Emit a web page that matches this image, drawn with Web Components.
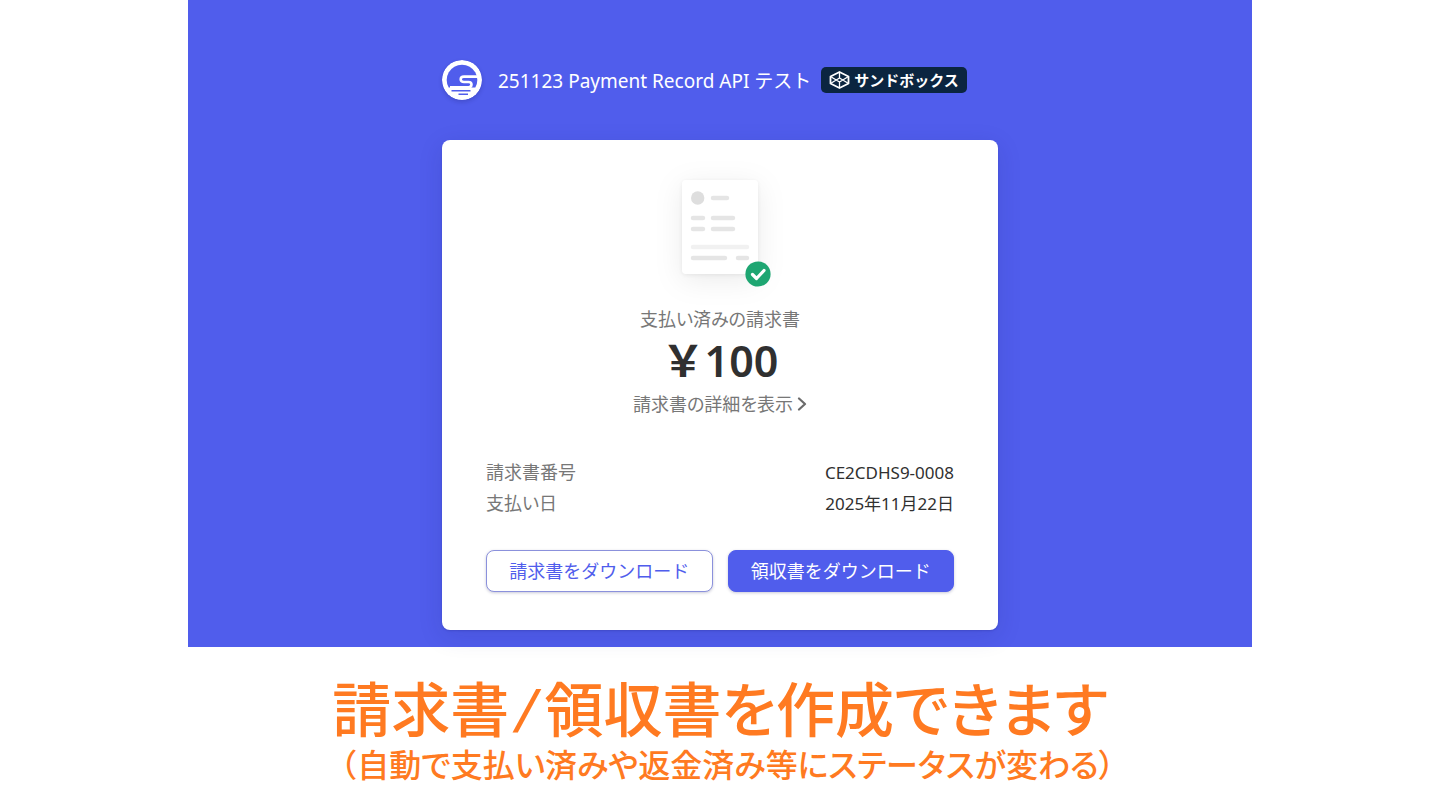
<!DOCTYPE html>
<html lang="ja">
<head>
<meta charset="utf-8">
<meta name="viewport" content="width=device-width, initial-scale=1">
<title>請求書</title>
<style>
  body {
    --brand-color: #505dec;
    --text-color: #303030;
    --muted-color: #777;
    --accent-color: #ff7a21;
    background: #fff;
    color: var(--text-color);
    font-family: "Noto Sans", "Noto Sans CJK JP", sans-serif;
    font-size: 18px;
    margin: 0;
  }

  .open {
    font-feature-settings: normal;
  }
</style>
</head>
<body>
  <invoice-stage>
    <merchant-header slot="header">
      251123 Payment Record API テスト
      <sandbox-badge slot="badge">サンドボックス</sandbox-badge>
    </merchant-header>
    <invoice-card>
      <span slot="status">支払い済みの請求書</span>
      <span slot="amount">￥100</span>
      <span slot="details">請求書の詳細を表示</span>
      <invoice-facts slot="facts" number="CE2CDHS9-0008" date="2025年11月22日"></invoice-facts>
      <download-button slot="actions">請求書をダウンロード</download-button>
      <download-button slot="actions" primary>領収書をダウンロード</download-button>
    </invoice-card>
  </invoice-stage>
  <slide-caption>
    <span slot="title">請求書/領収書を作成できます</span>
    <span slot="note"><span class="open">（</span>自動で支払い済みや返金済み等にステータスが変わる）</span>
  </slide-caption>

<script>
function attach(element, html) {
  const template = document.createElement('template');
  template.innerHTML = html;
  element.attachShadow({ mode: 'open' });
  element.shadowRoot.appendChild(template.content.cloneNode(true));
}

class InvoiceStage extends HTMLElement {
  constructor() {
    super();
    attach(this, `
      <style>
        :host {
          background: var(--brand-color);
          box-sizing: border-box;
          display: block;
          margin: 0 auto;
          max-width: 1064px;
          padding: 60px 16px 17px;
        }

        main {
          display: grid;
          gap: 40px;
          margin: 0 auto;
          max-width: 556px;
        }
      </style>
      <main>
        <slot name="header"></slot>
        <slot></slot>
      </main>
    `);
  }
}

class MerchantHeader extends HTMLElement {
  constructor() {
    super();
    attach(this, `
      <style>
        :host {
          align-items: center;
          color: #fff;
          display: flex;
          font-size: 19px;
          min-height: 40px;
          white-space: nowrap;
        }

        svg {
          border-radius: 50%;
          box-shadow: 0 2px 4px rgba(20, 20, 80, 0.2);
          flex: none;
          margin-right: 16px;
        }

        h1 {
          font: inherit;
          margin: 0 10px 0 0;
        }
      </style>
      <svg width="40" height="40" viewBox="0 0 40 40" aria-hidden="true">
        <circle cx="20" cy="20" r="20" fill="#fff"/>
        <path d="M6.700 27.500A15.300 15.300 0 1 1 33.300 27.500z" fill="var(--brand-color)"/>
        <path d="M37 16.600H22q-3.300 0-3.300 2.700T22 22h4.500q3 0 3 2.600t-3 2.600H8" fill="none" stroke="#fff" stroke-width="2.600"/>
        <path d="M9.500 30.800h19M16.500 34.200h9.500" stroke="var(--brand-color)" stroke-width="1.500"/>
      </svg>
      <h1><slot></slot></h1>
      <slot name="badge"></slot>
    `);
  }
}

class SandboxBadge extends HTMLElement {
  constructor() {
    super();
    attach(this, `
      <style>
        :host {
          align-items: center;
          background: #0b2540;
          border-radius: 5px;
          color: #fff;
          display: inline-flex;
          font-size: 15px;
          font-weight: 700;
          gap: 4px;
          line-height: 26px;
          padding: 0 8px;
        }
      </style>
      <svg width="21" height="18" viewBox="0 0 21 18" fill="none" stroke="#fff" stroke-width="1.800" stroke-linejoin="round" aria-hidden="true">
        <path d="M10.500 1L19.500 5.500v7l-9 4.500-9-4.500v-7z"/>
        <path d="M1.500 5.500l9 5.500 9-5.500M1.500 12.500l9-5.500 9 5.500M10.500 1v6M10.500 11v6" stroke-width="1.300"/>
      </svg>
      <slot></slot>
    `);
  }
}

class InvoiceIllustration extends HTMLElement {
  constructor() {
    super();
    attach(this, `
      <style>
        :host {
          display: block;
          height: 120px;
        }

        svg {
          overflow: visible;
        }

        .sheet {
          filter: drop-shadow(0 6px 14px rgba(0, 0, 0, 0.08)) drop-shadow(0 1px 2px rgba(0, 0, 0, 0.07));
        }
      </style>
      <svg width="120" height="120" viewBox="0 0 120 120" aria-hidden="true">
        <rect class="sheet" x="22" y="8" width="76" height="94" rx="4" fill="#fff"/>
        <circle cx="37.700" cy="26" r="6.700" fill="#dedede"/>
        <g stroke="#e5e5e5" stroke-width="4.400" stroke-linecap="round">
          <path d="M53 26h14M33 46h10M53 46h20M33 57h10M53 57h20M33 86h32M78 86h9"/>
          <path d="M33 75h54" stroke="#f1f1f1"/>
        </g>
        <circle cx="98" cy="102" r="12.600" fill="#1ea672"/>
        <path d="M92.500 102.500l4 4 7.500-8" fill="none" stroke="#fff" stroke-width="3.200" stroke-linecap="round" stroke-linejoin="round"/>
      </svg>
    `);
  }
}

class InvoiceCard extends HTMLElement {
  constructor() {
    super();
    attach(this, `
      <style>
        :host {
          background: #fff;
          border-radius: 8px;
          box-shadow: 0 6px 24px rgba(30, 30, 110, 0.14), 0 1px 2px rgba(30, 30, 110, 0.2);
          display: block;
          padding: 32px 44px 38px;
        }

        .summary {
          align-items: center;
          color: var(--muted-color);
          display: flex;
          flex-direction: column;
        }

        p,
        a {
          font-feature-settings: "palt";
        }

        p {
          line-height: 24px;
          margin: 15px 0 0;
        }

        h2 {
          color: var(--text-color);
          font-size: 43px;
          font-weight: 600;
          line-height: 60px;
          margin: 0;
        }

        a {
          align-items: center;
          color: inherit;
          display: flex;
          gap: 4px;
          line-height: 26px;
          text-decoration: none;
        }

        .actions {
          display: grid;
          gap: 15px;
          grid-template-columns: 1fr 1fr;
          margin-top: 31px;
        }
      </style>
      <div class="summary">
        <invoice-illustration></invoice-illustration>
        <p><slot name="status"></slot></p>
        <h2><slot name="amount"></slot></h2>
        <a href="#details">
          <slot name="details"></slot>
          <svg width="10" height="14" viewBox="0 0 10 14" fill="none" stroke="#6b6b6b" stroke-width="2.200" stroke-linecap="round" stroke-linejoin="round" aria-hidden="true">
            <path d="M2 1.500L8 7l-6 5.500"/>
          </svg>
        </a>
      </div>
      <slot name="facts"></slot>
      <div class="actions"><slot name="actions"></slot></div>
    `);
  }
}

class InvoiceFacts extends HTMLElement {
  constructor() {
    super();
    attach(this, `
      <style>
        :host {
          display: block;
          margin-top: 40px;
        }

        table {
          border-collapse: collapse;
          line-height: 31px;
          width: 100%;
        }

        th {
          color: var(--muted-color);
          font-feature-settings: "palt";
          font-weight: 400;
          padding: 0;
          text-align: left;
        }

        td {
          font-size: 17px;
          padding: 0;
          text-align: right;
        }
      </style>
      <table>
        <tr><th scope="row">請求書番号</th><td id="number"></td></tr>
        <tr><th scope="row">支払い日</th><td id="date"></td></tr>
      </table>
    `);
  }

  connectedCallback() {
    this.shadowRoot.getElementById('number').textContent = this.getAttribute('number');
    this.shadowRoot.getElementById('date').textContent = this.getAttribute('date');
  }
}

class DownloadButton extends HTMLElement {
  constructor() {
    super();
    attach(this, `
      <style>
        :host {
          display: block;
        }

        button {
          background: #fff;
          border: 1px solid #8b91dc;
          border-radius: 8px;
          box-shadow: 0 1px 3px rgba(40, 40, 100, 0.25);
          color: var(--brand-color);
          cursor: pointer;
          display: block;
          font: inherit;
          line-height: 40px;
          padding: 0;
          width: 100%;
        }

        :host([primary]) button {
          background: var(--brand-color);
          border-color: var(--brand-color);
          color: #fff;
        }
      </style>
      <button type="button"><slot></slot></button>
    `);
  }
}

class SlideCaption extends HTMLElement {
  constructor() {
    super();
    attach(this, `
      <style>
        :host {
          color: var(--accent-color);
          display: block;
          font-family: "Liberation Mono", "Noto Sans CJK JP", monospace;
          font-feature-settings: "palt";
          font-weight: 500;
          padding: 38px 16px 20px;
          text-align: center;
        }

        h2 {
          font-size: 59px;
          font-weight: inherit;
          line-height: 64px;
          margin: 0;
        }

        p {
          font-size: 32px;
          line-height: 40px;
          margin: 0;
        }
      </style>
      <h2><slot name="title"></slot></h2>
      <p><slot name="note"></slot></p>
    `);
  }
}

customElements.define('invoice-stage', InvoiceStage);
customElements.define('merchant-header', MerchantHeader);
customElements.define('sandbox-badge', SandboxBadge);
customElements.define('invoice-illustration', InvoiceIllustration);
customElements.define('invoice-card', InvoiceCard);
customElements.define('invoice-facts', InvoiceFacts);
customElements.define('download-button', DownloadButton);
customElements.define('slide-caption', SlideCaption);
</script>
</body>
</html>
